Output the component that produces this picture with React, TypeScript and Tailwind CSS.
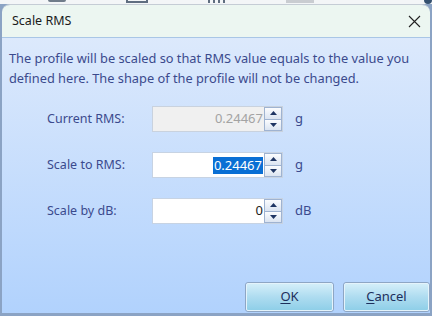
import React from 'react';

function Spinner() {
  return (
    <div className="flex flex-col w-[18px] h-full">
      <div className="flex-1 flex items-center justify-center border border-[#9fb3d1] bg-gradient-to-b from-[#fbfcfe] to-[#dbe4f1]">
        <svg width="7" height="4" viewBox="0 0 7 4"><path d="M0 4 L3.5 0 L7 4 Z" fill="#1f3563" /></svg>
      </div>
      <div className="flex-1 flex items-center justify-center border border-t-0 border-[#9fb3d1] bg-gradient-to-b from-[#fbfcfe] to-[#dbe4f1]">
        <svg width="7" height="4" viewBox="0 0 7 4"><path d="M0 0 L3.5 4 L7 0 Z" fill="#1f3563" /></svg>
      </div>
    </div>
  );
}

function Field({ label, value, unit, disabled, selected }: { label: string; value: string; unit: string; disabled?: boolean; selected?: boolean }) {
  return (
    <div className="flex items-center h-[26px]">
      <div className="w-[150px] pl-[45px] text-[12.5px] text-[#3b4a8d] whitespace-nowrap">{label}</div>
      <div className={`flex h-full w-[131px] border ${disabled ? 'border-[#c9d2de] bg-[#f0f0f0]' : 'border-[#c7d3e3] bg-white'}`}>
        <div className="flex-1 flex items-center justify-end pr-[1px] text-[13px]">
          {selected ? (
            <span className="bg-[#0a6fd4] text-white px-[1px] leading-[17px]">{value}</span>
          ) : (
            <span className={disabled ? 'text-[#a3a3a3]' : 'text-[#222]'}>{value}</span>
          )}
        </div>
        <Spinner />
      </div>
      <div className="pl-[12px] text-[13px] text-[#3b4a8d]">{unit}</div>
    </div>
  );
}

function Btn({ u, rest, w }: { u: string; rest: string; w: string }) {
  return (
    <button className={`${w} h-[30px] rounded-[3px] border border-[#8ea6c4] p-0`}>
      <div className="h-full w-full rounded-[2px] border border-[#e4f3fb] bg-gradient-to-b from-[#d3eef9] via-[#aedcf0] to-[#8fcfe8] flex items-center justify-center text-[13px] text-[#1d2f5c]">
        <span><span className="underline underline-offset-2">{u}</span>{rest}</span>
      </div>
    </button>
  );
}

export default function App() {
  return (
    <div className="w-[432px] h-[316px] overflow-hidden bg-[#8ba3c4] flex flex-col" style={{ fontFamily: '"Noto Sans", "Open Sans", sans-serif' }}>
      <div className="h-[4px] bg-[#f3f5f7] flex items-start gap-[60px] pl-[48px] shrink-0">
        <div className="w-[22px] h-[2px] border-b-2 border-[#707c8a] rounded-b" />
        <div className="w-[26px] h-[3px] border-b-2 border-x-2 border-[#5f6d80]" />
        <div className="w-[22px] h-[3px] flex gap-[3px]"><span className="w-[2px] h-[3px] bg-[#5f6d80]" /><span className="w-[2px] h-[3px] bg-[#5f6d80]" /><span className="w-[2px] h-[3px] bg-[#5f6d80]" /><span className="w-[2px] h-[3px] bg-[#5f6d80]" /></div>
        <div className="w-[34px] h-[3px] bg-[#c9ccd1]" />
        <div className="w-[10px] h-[4px] rounded-b-full bg-[#34506f] ml-[50px]" />
      </div>
      <div className="ml-[2px] w-[428px] h-[309px] rounded-t-[8px] overflow-hidden flex flex-col border-t border-[#c5ccd5]">
        <div className="h-[33px] bg-[#ecf6f1] flex items-center justify-between pl-[10px] pr-[8px] border-b border-[#a9c6e6] shrink-0">
          <span className="text-[12.5px] text-[#1a1a1a]">Scale RMS</span>
          <svg width="13" height="13" viewBox="0 0 13 13" className="mr-[1px]"><path d="M1 1 L12 12 M12 1 L1 12" stroke="#222" strokeWidth="1.1" /></svg>
        </div>
        <div className="flex-1 bg-gradient-to-b from-[#dce9fc] to-[#b1d2fd] flex flex-col">
          <p className="pl-[7px] pt-[10px] text-[12.8px] leading-[20px] text-[#3b4a8d] whitespace-nowrap">
            The profile will be scaled so that RMS value equals to the value you<br />
            defined here. The shape of the profile will not be changed.
          </p>
          <div className="flex flex-col gap-[20px] mt-[18px]">
            <Field label="Current RMS:" value="0.24467" unit="g" disabled />
            <Field label="Scale to RMS:" value="0.24467" unit="g" selected />
            <Field label="Scale by dB:" value="0" unit="dB" />
          </div>
          <div className="flex justify-end gap-[9px] mt-auto mb-[1px]">
            <Btn u="O" rest="K" w="w-[89px]" />
            <Btn u="C" rest="ancel" w="w-[87px]" />
          </div>
        </div>
      </div>
    </div>
  );
}
